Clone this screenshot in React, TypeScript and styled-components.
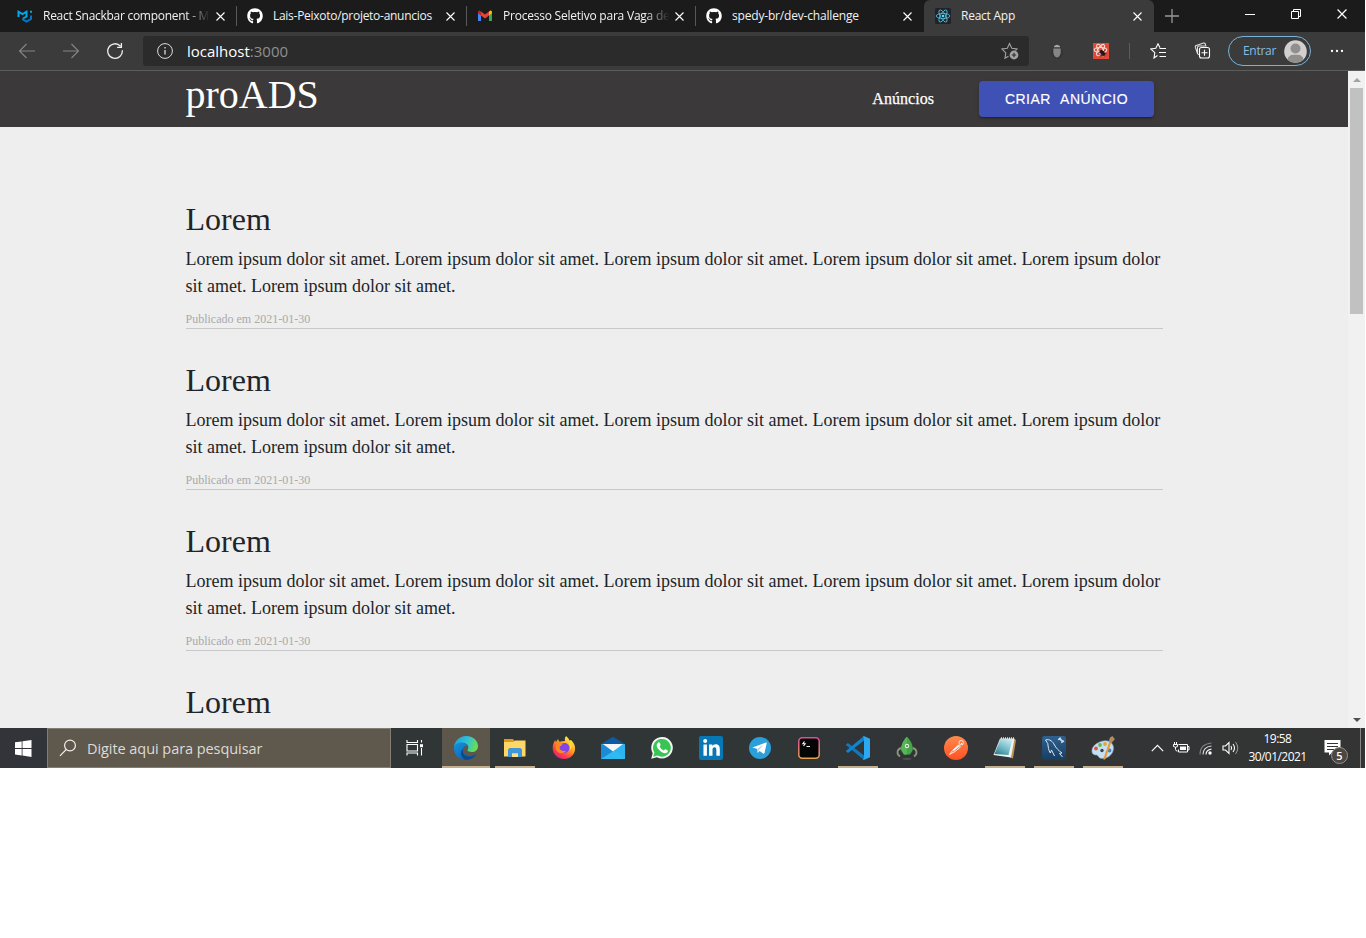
import React from 'react';
import styled, { createGlobalStyle, css } from 'styled-components';
import { FaGithub, FaLinkedinIn } from 'react-icons/fa';

const GlobalStyle = createGlobalStyle`
  * { box-sizing: border-box; }
  html, body { margin: 0; padding: 0; background: #fff; overflow: hidden; }
  svg { display: block; flex: none; }
`;

const ui = `'Open Sans', 'Noto Sans', sans-serif`;

const Screen = styled.div`
  width: 1365px;
  height: 768px;
  display: flex;
  flex-direction: column;
  overflow: hidden;
`;

/* Tab strip */
const TabStrip = styled.div`
  height: 32px;
  flex: none;
  display: flex;
  background: #1b1b1b;
  font: 12px/16px ${ui};
  color: #f2f2f2;
`;

const Tab = styled.div<{ $w: number; $pad: number; $active?: boolean; $divider?: boolean }>`
  width: ${p => p.$w}px;
  flex: none;
  display: flex;
  align-items: center;
  padding: 0 12px 0 ${p => p.$pad}px;
  position: relative;
  ${p => p.$active && css`background: #3b3b3b; border-radius: 6px 6px 0 0;`}
  ${p => p.$divider && css`
    &::after {
      content: '';
      position: absolute;
      right: 0;
      top: 6px;
      width: 1px;
      height: 20px;
      background: #585858;
    }
  `}
`;

const TabTitle = styled.span<{ $ls: number; $fade?: boolean }>`
  flex: 1;
  min-width: 0;
  margin: 0 6px 0 10px;
  white-space: nowrap;
  overflow: hidden;
  letter-spacing: ${p => p.$ls}px;
  ${p => p.$fade && css`
    mask-image: linear-gradient(to right, #000 calc(100% - 24px), transparent);
  `}
`;

const NewTab = styled.div`
  width: 36px;
  flex: none;
  display: grid;
  place-items: center;
`;

const WindowControls = styled.div`
  margin-left: auto;
  display: flex;
`;

const WindowButton = styled.div`
  width: 46px;
  height: 28px;
  display: grid;
  place-items: center;
`;

/* Toolbar */
const Toolbar = styled.div`
  height: 39px;
  flex: none;
  display: flex;
  align-items: center;
  background: #3b3b3b;
  border-bottom: 1px solid #5c5c5c;
  padding: 0 20px 0 18px;
`;

const NavButtons = styled.div`
  display: flex;
  gap: 26px;
  width: 125px;
`;

const AddressBar = styled.div`
  width: 886px;
  height: 30px;
  display: flex;
  align-items: center;
  gap: 14px;
  padding: 0 10px 0 14px;
  border-radius: 3px;
  background: #2b2b2b;
  font: 15px/20px ${ui};
  color: #fff;
`;

const Url = styled.span`
  flex: 1;
  span { color: #8f8f8f; }
`;

const ToolbarActions = styled.div`
  flex: 1;
  display: flex;
  align-items: center;
  padding-left: 20px;
`;

const ToolbarItem = styled.div<{ $gap: number }>`
  flex: none;
  margin-right: ${p => p.$gap}px;
`;

const Rule = styled.div`
  width: 1px;
  height: 16px;
  background: #5c5c5c;
`;

const Profile = styled.div`
  width: 83px;
  height: 30px;
  display: flex;
  align-items: center;
  justify-content: space-between;
  padding: 0 3px 0 14px;
  border: 1px solid #76b3dc;
  border-radius: 15px;
  font: 12px/16px ${ui};
  letter-spacing: -0.3px;
  color: #86bde2;
`;

/* Web page */
const Viewport = styled.div`
  height: 657px;
  flex: none;
  display: flex;
  overflow: hidden;
`;

const Page = styled.div`
  flex: 1;
  height: 657px;
  overflow: hidden;
  background: #eee;
  font-family: 'Liberation Serif', 'Times New Roman', serif;
  color: #212529;
`;

const Header = styled.header`
  height: 56px;
  display: flex;
  align-items: center;
  padding: 0 194px 0 185.5px;
  background: #3c393a;
  color: #fff;
`;

const Brand = styled.div`
  font-size: 40px;
  line-height: 46px;
  margin-bottom: 8px;
`;

const NavLink = styled.a`
  margin-left: auto;
  margin-right: 45px;
  font-size: 16px;
  line-height: 20px;
  letter-spacing: 0.04px;
  -webkit-text-stroke: 0.25px #fff;
`;

const CreateButton = styled.button`
  width: 175px;
  height: 36px;
  padding: 0;
  border: 0;
  border-radius: 4px;
  background: #3f51b5;
  color: #fff;
  font: 14px/24px 'Liberation Sans', Arial, sans-serif;
  letter-spacing: 0.5px;
  word-spacing: 5.500px;
  text-transform: uppercase;
  white-space: nowrap;
  -webkit-text-stroke: 0.15px #fff;
  box-shadow: 0 3px 1px -2px rgba(0, 0, 0, 0.2), 0 2px 2px 0 rgba(0, 0, 0, 0.14), 0 1px 5px 0 rgba(0, 0, 0, 0.12);
`;

const AdList = styled.main`
  padding: 41px 185.5px 0;
`;

const Ad = styled.article`
  height: 161px;
  padding-top: 32px;
  border-bottom: 1px solid #c8c8c8;
`;

const AdTitle = styled.h2`
  margin: 0 0 8px;
  font-size: 32px;
  font-weight: 400;
  line-height: 38px;
`;

const AdText = styled.p`
  margin: 0;
  font-size: 18px;
  line-height: 27px;
`;

const AdDate = styled.small`
  display: block;
  margin-top: 10px;
  font-size: 12px;
  line-height: 18px;
  color: #a9a9a9;
`;

const Scrollbar = styled.div`
  width: 17px;
  height: 657px;
  display: flex;
  flex-direction: column;
  align-items: center;
  background: #f1f1f1;
`;

const ScrollArrow = styled.div`
  width: 17px;
  height: 17px;
  display: grid;
  place-items: center;
`;

const ScrollThumb = styled.div`
  width: 13px;
  height: 226px;
  margin-bottom: auto;
  background: #c1c1c1;
`;

/* Taskbar */
const Taskbar = styled.div`
  height: 40px;
  flex: none;
  display: flex;
  background: linear-gradient(90deg, #32343a 0%, #303536 28%, #303536 58%, #333436 75%, #343434 100%);
  font-family: ${ui};
  color: #fff;
`;

const StartButton = styled.div`
  width: 47px;
  display: grid;
  place-items: center;
`;

const SearchBox = styled.div`
  width: 344px;
  display: flex;
  align-items: center;
  gap: 10px;
  padding-left: 11px;
  border: 1px solid #827d75;
  background: #5f584d;
  font-size: 14.5px;
  letter-spacing: -0.06px;
  color: #dedbd7;
`;

const TaskView = styled.div`
  width: 51px;
  padding-left: 15px;
  display: flex;
  align-items: center;
`;

const Apps = styled.div`
  display: flex;
  gap: 1px;
`;

const AppButton = styled.div<{ $open?: boolean; $focused?: boolean }>`
  width: 48px;
  height: 40px;
  display: flex;
  flex-direction: column;
  align-items: center;
  justify-content: space-between;
  padding-top: 8px;
  background: ${p => (p.$focused ? '#5c564b' : 'transparent')};
  &::after {
    content: '';
    width: ${p => (p.$focused ? 48 : 40)}px;
    height: 2px;
    background: ${p => (p.$open || p.$focused ? '#c3ae8d' : 'transparent')};
  }
`;

const Tray = styled.div`
  margin-left: auto;
  display: flex;
  align-items: center;
`;

const TrayIcons = styled.div`
  display: flex;
  align-items: center;
  gap: 9px;
`;

const Clock = styled.div`
  width: 77px;
  font-size: 12px;
  line-height: 18px;
  letter-spacing: -0.55px;
  text-align: center;
`;

const Notifications = styled.div`
  width: 44px;
  height: 40px;
  padding: 11px 0 0 8px;
  position: relative;
`;

const Badge = styled.span`
  position: absolute;
  left: 15px;
  top: 19px;
  width: 17px;
  height: 17px;
  border: 1px solid #96928b;
  border-radius: 50%;
  background: #4c4841;
  font: 600 11px/15px ${ui};
  text-align: center;
`;

const ShowDesktop = styled.div`
  width: 5px;
  height: 40px;
  border-left: 1px solid #858585;
`;

const CloseIcon = ({ size = 9 }: { size?: number }) => (
  <svg width={size} height={size} viewBox="0 0 9 9" stroke="#fff" strokeWidth="1.1">
    <path d="M.5 .5l8 8M8.500 .5l-8 8" />
  </svg>
);

const MuiIcon = () => (
  <svg width="16" height="14" viewBox="0 0 16 14" fill="none" strokeWidth="2">
    <path d="M1.500 8V2.700L5.500 5l4-2.300v4.800L6 9.500" stroke="#00a8ee" />
    <path d="M6 9.500v1l3.500 2L14 10V6.500" stroke="#0078c8" />
    <path d="M14 1.800v2" stroke="#00a8ee" />
  </svg>
);

const GmailIcon = () => (
  <svg width="14" height="12" viewBox="0 0 14 12">
    <path d="M0 2v8.500q0 .5.800.5H3V4z" fill="#4285f4" />
    <path d="M14 2v8.500q0 .5-.8.5H11V4z" fill="#34a853" />
    <path d="M0 2.200Q0 .3 1.600.5L3 1.500v4L0 3.300z" fill="#c5221f" />
    <path d="M14 2.200Q14 .3 12.400.5L11 1.500v4l3-2.200z" fill="#fbbc04" />
    <path d="M3 1.500l4 3 4-3v4l-4 3-4-3z" fill="#ea4335" />
  </svg>
);

const ReactIcon = () => (
  <svg width="16" height="16" viewBox="0 0 16 16">
    <rect width="16" height="16" rx="1.500" fill="#20232a" />
    <g fill="none" stroke="#55bfdb" strokeWidth=".85">
      <ellipse cx="8" cy="8" rx="6.800" ry="2.600" />
      <ellipse cx="8" cy="8" rx="6.800" ry="2.600" transform="rotate(60 8 8)" />
      <ellipse cx="8" cy="8" rx="6.800" ry="2.600" transform="rotate(120 8 8)" />
    </g>
    <circle cx="8" cy="8" r="1.300" fill="#61dafb" />
  </svg>
);

const EdgeIcon = () => (
  <svg width="24" height="24" viewBox="0 0 24 24">
    <defs>
      <linearGradient id="edgeTop" x1="0" y1=".3" x2="1" y2=".6">
        <stop offset="0" stopColor="#1c9fe0" />
        <stop offset=".5" stopColor="#30c3d4" />
        <stop offset="1" stopColor="#6be04b" />
      </linearGradient>
      <linearGradient id="edgeLow" x1="0" y1="0" x2="1" y2="1">
        <stop offset="0" stopColor="#1493df" />
        <stop offset="1" stopColor="#0b56a8" />
      </linearGradient>
    </defs>
    <path d="M0 12C0 5 5.500 0 12 0c7 0 12 4.600 12 10 0 4-3 6-6 6-3.500 0-5-1-4.500-2.200C15 12 15 8 10 7 5 6.500 1 9 0 12z" fill="url(#edgeTop)" />
    <path d="M0 12c0-3.500 4-6 8.500-5.500C12 7 14 9 14.300 11 12 9 9 10.500 9 14c0 5 6 7.500 13.300 4C20 22 16 24 12 24 5 24 0 19 0 12z" fill="url(#edgeLow)" />
    <path d="M9.200 12.500C7.500 18 12 21 17 20.500c2-.3 4-1.500 5.400-2.700C20 22 16 24 12 24 7 22.500 5 16 9.200 12.500z" fill="#0c4a8d" />
  </svg>
);

const ExplorerIcon = () => (
  <svg width="24" height="24" viewBox="0 0 24 24">
    <path d="M1 3h9l1.500 2H22v5H1z" fill="#dd9a12" />
    <path d="M1 6h9l2-1.500h10.500V20.500H1z" fill="#ffd766" />
    <path d="M5 21v-7.500L6.500 12h11l1.500 1.500V21h-4v-3.500H9V21z" fill="#3f96d8" />
    <path d="M9 17.500h6V21H9z" fill="#ffe08a" />
  </svg>
);

const FirefoxIcon = () => (
  <svg width="24" height="24" viewBox="0 0 24 24">
    <defs>
      <linearGradient id="fox" x1=".8" y1=".1" x2=".2" y2="1">
        <stop offset="0" stopColor="#fff044" />
        <stop offset=".4" stopColor="#ff9a24" />
        <stop offset=".7" stopColor="#ff4248" />
        <stop offset="1" stopColor="#e31587" />
      </linearGradient>
    </defs>
    <path d="M14 0c2 1.500 3 3 3.500 4.500L19 4c3 3 4.500 6 4 9.500C22.500 19 18 23 12 23S1 18.500.7 12.500C.6 9 1.500 6.500 3.200 4L4 6.200 6 3l1.300 2.700c2-.5 4-.6 5.700-.7-.5-2 0-3.500 1-5z" fill="url(#fox)" />
    <circle cx="12.500" cy="12" r="5" fill="#8344e8" />
    <path d="M4 6c3-1 5 0 7 2-1 0-1 2.200-3.800 2.500 0 4 4 5.500 7 4-2.500 4.500-9.500 3.500-10.700-2.500z" fill="#ff8a1c" />
    <path d="M15 5c3 2 4 6 2.500 9 2-1 2.800-3.500 2-6z" fill="#ffe13b" />
  </svg>
);

const MailIcon = () => (
  <svg width="24" height="24" viewBox="0 0 24 24">
    <path d="M0 8L12 .8 24 8v4H0z" fill="#0c59a4" />
    <path d="M0 8h24v15H0z" fill="#2cb5f0" />
    <path d="M0 8v15l15-9z" fill="#1b8bd7" />
    <path d="M0 23l13.500-8.500L24 23z" fill="#31bdf3" opacity=".8" />
    <path d="M2 8h20l-10 7.500z" fill="#f5f5f5" />
  </svg>
);

const WhatsAppIcon = () => (
  <svg width="24" height="24" viewBox="0 0 24 24">
    <path d="M1.200 22.800l1.500-5.600A10.800 10.800 0 1 1 7 21.300z" fill="#f4f6f4" />
    <path d="M3.200 20.800l1.200-4.200a8.900 8.900 0 1 1 3.200 3z" fill="#38c554" />
    <path d="M8.300 6.500c.7-.5 1.300-.2 1.600.6l.7 1.700c0 .6-.6 1-1 1.600 1 2 2.300 3 4.300 4 .6-.5 1-1.300 1.600-1.200l2 1c.7.500.3 1.700-.5 2.400-2 1.400-5 0-7-1.800-3.500-3.200-4.500-6-1.700-8.300z" fill="#fff" />
  </svg>
);

const LinkedInTile = styled.div`
  width: 24px;
  height: 24px;
  display: grid;
  place-items: center;
  border-radius: 2px;
  background: #0877b5;
`;

const TelegramIcon = () => (
  <svg width="24" height="24" viewBox="0 0 24 24">
    <circle cx="12" cy="12" r="11" fill="#2b9fd9" />
    <path d="M4.500 11.600L18 6.500q.9-.2.700.8L16.500 17q-.4 1.200-1.400.5L11.600 15l-1.900 1.900-.4-3.800z" fill="#fff" />
    <path d="M9.300 13.100L16 8.300 11 14l-1.300 2.900z" fill="#b8d5e7" />
  </svg>
);

const TerminalIcon = () => (
  <svg width="24" height="24" viewBox="0 0 24 24">
    <defs>
      <linearGradient id="term" x1="0" y1="0" x2="0" y2="1">
        <stop offset="0" stopColor="#e34a9e" />
        <stop offset="1" stopColor="#e9a14c" />
      </linearGradient>
    </defs>
    <rect x="1.800" y="1.800" width="20.400" height="20.400" rx="3.500" fill="#050505" stroke="url(#term)" strokeWidth="1.500" />
    <path d="M7.500 5.500L5.800 7.800h2.400L6.500 10M9.500 10.500h3.500" stroke="#f4f4f4" strokeWidth="1.100" fill="none" />
  </svg>
);

const VsCodeIcon = () => (
  <svg width="24" height="24" viewBox="0 0 24 24">
    <path d="M0 8.500L2 7l16 12.500V24L.2 9.300z" fill="#1278be" />
    <path d="M0 15.500L2 17 18 4.500V0L.2 14.700z" fill="#0f84d0" />
    <path d="M17.800 0L24 2.800v18.400L17.800 24q-.8-.2-1-.9l1.200-.6V1.600L16.800.9z" fill="#2aa8f2" />
  </svg>
);

const RobotIcon = () => (
  <svg width="24" height="24" viewBox="0 0 24 24">
    <path d="M6.500 12C2 13 1 18 5 20.500M17.500 12c4.500 1 5.500 6 1.500 8.500" stroke="#8b9677" strokeWidth="1.800" fill="none" />
    <path d="M12 .8c4 4 6.500 9 5.500 14L15 18.500H9L6.500 14.800C5.500 10 8 5 12 .8z" fill="#45a548" />
    <path d="M12 .8c-4 4-6.500 9-5.500 14L9 18.500h3z" fill="#55b657" />
    <circle cx="12" cy="10" r="2.200" fill="#e1eddb" />
    <circle cx="12" cy="10" r="1" fill="#55745a" />
    <ellipse cx="12" cy="22.800" rx="4.500" ry=".9" fill="#555" />
  </svg>
);

const PostmanIcon = () => (
  <svg width="24" height="24" viewBox="0 0 24 24">
    <defs>
      <linearGradient id="post" x1="0" y1="0" x2="0" y2="1">
        <stop offset="0" stopColor="#ff8a4c" />
        <stop offset="1" stopColor="#ff5026" />
      </linearGradient>
    </defs>
    <circle cx="12" cy="12" r="12" fill="url(#post)" />
    <path d="M5.500 18.500l3-4L14.500 9l2 2L11 15.500z" fill="#ff7a47" stroke="#ffe9de" strokeWidth="1" />
    <path d="M9.300 14.500l6-5" stroke="#fff" strokeWidth="1.300" />
    <circle cx="17.200" cy="6.700" r="2.200" fill="none" stroke="#ffe9de" />
    <path d="M17 7l1.500 1.500" stroke="#fff" />
  </svg>
);

const NotepadIcon = () => (
  <svg width="24" height="24" viewBox="0 0 24 24">
    <defs>
      <linearGradient id="note" x1=".8" y1="0" x2=".2" y2="1">
        <stop offset="0" stopColor="#c6edf1" />
        <stop offset=".55" stopColor="#74bac7" />
        <stop offset="1" stopColor="#2e7e8f" />
      </linearGradient>
    </defs>
    <path d="M20.500 2.500L23 4l-3 18.500-3.500-1.200z" fill="#b99556" />
    <path d="M7 2.500h14.500L18 21.500.500 19z" fill="#eef3f2" />
    <path d="M7.500 3h12L15.500 19 1.500 18z" fill="url(#note)" />
    <path d="M8 2.300h13" stroke="#d9e2e2" strokeWidth="2" strokeDasharray="1 1" />
  </svg>
);

const WorkbenchIcon = () => (
  <svg width="24" height="24" viewBox="0 0 24 24">
    <defs>
      <linearGradient id="bench" x1="0" y1="0" x2="0" y2="1">
        <stop offset="0" stopColor="#2f6190" />
        <stop offset="1" stopColor="#173e63" />
      </linearGradient>
    </defs>
    <rect width="24" height="24" rx="2.500" fill="url(#bench)" />
    <path d="M3.500 4C8 2.500 11 6 12.500 9c1.500 3 4 5.500 7.500 8l-2.500.4 3 3.600M3.500 4l2.300 3.600c.4 3 .7 7 2.500 9.400l1.200-3 3 6" fill="none" stroke="#dae6ee" strokeWidth="1" />
    <path d="M17.500 2.500l3 2.800" stroke="#c9d9e5" strokeWidth="1.800" />
    <path d="M16.200 3.800l2.400-2.200M19.400 6.800l2.600-2" stroke="#e5edf3" strokeWidth="1.200" />
  </svg>
);

const PaintIcon = () => (
  <svg width="24" height="24" viewBox="0 0 24 24">
    <path d="M10 5.500c7-2.500 12.500 1 12.500 6.500S18 22.500 10.500 22.500c-3 0-3-3.300-5-3.500C2 19 .5 17 1 14c.5-4 4.500-7 9-8.500z" fill="#c5dff1" stroke="#7ea5c3" strokeWidth=".6" />
    <circle cx="5" cy="12.500" r="1.900" fill="#dc5545" />
    <circle cx="9" cy="9" r="1.900" fill="#69b54e" />
    <circle cx="14" cy="8" r="1.900" fill="#eaa132" />
    <circle cx="11" cy="14.500" r="1.700" fill="#35434e" />
    <circle cx="18.500" cy="14.500" r="1.900" fill="#3a87cc" />
    <path d="M18.200 6l2 .8L14.500 23l-2 1 .3-2.500z" fill="#e79a3d" />
    <path d="M17.500 6l1.500-4.500L21.500 0l1 1.500L24 3l-3.500 4z" fill="#b48b62" />
  </svg>
);

const LinkedInIcon = () => (
  <LinkedInTile><FaLinkedinIn size={19} color="#fff" /></LinkedInTile>
);

const apps: { icon: React.FC; open?: boolean; focused?: boolean }[] = [
  { icon: EdgeIcon, focused: true },
  { icon: ExplorerIcon, open: true },
  { icon: FirefoxIcon },
  { icon: MailIcon },
  { icon: WhatsAppIcon },
  { icon: LinkedInIcon },
  { icon: TelegramIcon },
  { icon: TerminalIcon },
  { icon: VsCodeIcon, open: true },
  { icon: RobotIcon },
  { icon: PostmanIcon },
  { icon: NotepadIcon, open: true },
  { icon: WorkbenchIcon, open: true },
  { icon: PaintIcon, open: true },
];

const sentence = 'Lorem ipsum dolor sit amet.';
const ads = [1, 2, 3, 4].map(id => ({
  id,
  title: 'Lorem',
  text: Array(6).fill(sentence).join(' '),
  date: '2021-01-30',
}));

const Tabs = () => (
  <TabStrip>
    <Tab $w={237} $pad={17} $divider>
      <MuiIcon />
      <TabTitle $ls={-0.28} $fade>React Snackbar component - M</TabTitle>
      <CloseIcon />
    </Tab>
    <Tab $w={230} $pad={10} $divider>
      <FaGithub size={16} color="#fff" />
      <TabTitle $ls={-0.28}>Lais-Peixoto/projeto-anuncios</TabTitle>
      <CloseIcon />
    </Tab>
    <Tab $w={229} $pad={11} $divider>
      <GmailIcon />
      <TabTitle $ls={-0.22} $fade>&#8202;Processo Seletivo para Vaga de</TabTitle>
      <CloseIcon />
    </Tab>
    <Tab $w={228} $pad={10}>
      <FaGithub size={16} color="#fff" />
      <TabTitle $ls={-0.18}>spedy-br/dev-challenge</TabTitle>
      <CloseIcon />
    </Tab>
    <Tab $w={230} $pad={11} $active>
      <ReactIcon />
      <TabTitle $ls={-0.25}>React App</TabTitle>
      <CloseIcon />
    </Tab>
    <NewTab>
      <svg width="14" height="14" viewBox="0 0 14 14" stroke="#999" strokeWidth="1.300"><path d="M7 0v14M0 7h14" /></svg>
    </NewTab>
    <WindowControls>
      <WindowButton>
        <svg width="10" height="10" viewBox="0 0 10 10" stroke="#fff"><path d="M0 5.500h10" /></svg>
      </WindowButton>
      <WindowButton>
        <svg width="10" height="10" viewBox="0 0 10 10" fill="none" stroke="#fff"><path d="M.5 2.500h7v7h-7zM2.500 2V.5h7v7H8" /></svg>
      </WindowButton>
      <WindowButton><CloseIcon size={10} /></WindowButton>
    </WindowControls>
  </TabStrip>
);

const BrowserToolbar = () => (
  <Toolbar>
    <NavButtons>
      <svg width="18" height="16" viewBox="0 0 18 16" fill="none" stroke="#858585" strokeWidth="1.100"><path d="M17 8H1.500M8.500 1l-7 7 7 7" /></svg>
      <svg width="18" height="16" viewBox="0 0 18 16" fill="none" stroke="#858585" strokeWidth="1.100"><path d="M1 8h15.500M9.500 1l7 7-7 7" /></svg>
      <svg width="18" height="16" viewBox="0 0 18 16" fill="none" stroke="#f0f0f0" strokeWidth="1.300"><path d="M16.300 7.300A7.300 7.300 0 1 1 14.500 3.200M15.400 0v4.300h-4.300" /></svg>
    </NavButtons>
    <AddressBar>
      <svg width="16" height="16" viewBox="0 0 16 16" fill="none" stroke="#dcdcdc"><circle cx="8" cy="8" r="7.400" /><path d="M8 7v4.500M8 4v1.500" strokeWidth="1.300" /></svg>
      <Url>localhost<span>:3000</span></Url>
      <svg width="18" height="18" viewBox="0 0 18 18" fill="none" stroke="#a3a3a3" strokeWidth="1.100">
        <path d="M7.500 14.200L4 16.300l.8-5.400L1 7l5.300-.8L8.500 1.500l2.300 4.700L16 7l-1.500 1.300" />
        <circle cx="13" cy="13" r="4.400" fill="#a3a3a3" stroke="none" />
        <path d="M13 10.800v4.400M10.800 13h4.400" stroke="#2b2b2b" />
      </svg>
    </AddressBar>
    <ToolbarActions>
      <ToolbarItem $gap={28}>
        <svg width="16" height="16" viewBox="0 0 16 16">
          <ellipse cx="8" cy="9.500" rx="6" ry="6.500" fill="#2f2f2f" opacity=".5" />
          <path d="M5 3.300Q8 .3 11 3.300v1H5z" fill="#aaa" />
          <path d="M4.300 5.500h7.400v3.700q-.5 4.700-3.700 5.200-3.200-.5-3.700-5.200z" fill="#858585" />
        </svg>
      </ToolbarItem>
      <ToolbarItem $gap={20}>
        <svg width="16" height="16" viewBox="0 0 16 16">
          <rect width="16" height="16" fill="#df4936" />
          <g fill="none" stroke="#f7dcd7" strokeWidth="1.100">
            <ellipse cx="7.500" cy="7" rx="6.300" ry="2.500" />
            <ellipse cx="7.500" cy="7" rx="6.300" ry="2.500" transform="rotate(60 7.500 7)" />
            <ellipse cx="7.500" cy="7" rx="6.300" ry="2.500" transform="rotate(120 7.500 7)" />
          </g>
          <ellipse cx="9.500" cy="9.800" rx="2" ry="3.200" fill="#2a1512" transform="rotate(-40 9.500 9.800)" />
          <path d="M5.500 9.500l8 1.500M8 13.500l3.500-6M6.500 11.800l5.500 1" stroke="#2a1512" strokeWidth=".8" />
        </svg>
      </ToolbarItem>
      <ToolbarItem $gap={20}><Rule /></ToolbarItem>
      <ToolbarItem $gap={26}>
        <svg width="18" height="16" viewBox="0 0 18 16" fill="none" stroke="#fff" strokeWidth="1.100">
          <path d="M7.500 12.500L4 15l.8-5.400L.8 6l5-.8L8 .8l2 4M9.500 5.500H16M9 9.500H16M9.500 13.500H16" />
        </svg>
      </ToolbarItem>
      <ToolbarItem $gap={16}>
        <svg width="18" height="18" viewBox="0 0 18 18" fill="none" stroke="#fff" strokeWidth="1.100">
          <path d="M3.500 11.500L1.300 5.200Q1 3.800 2.300 3.400L9.500 1q1.300-.3 1.700.8l.5 1.500M5 12.500q-1.500 0-1.500-1.500V5.500Q3.500 4 5 4h7.500" opacity=".85" />
          <rect x="5.500" y="5.500" width="10" height="10.500" rx="2" fill="#3b3b3b" />
          <path d="M10.500 7.700v6M7.500 10.700h6" />
        </svg>
      </ToolbarItem>
      <ToolbarItem $gap={18}>
        <Profile>
          Entrar
          <svg width="23" height="23" viewBox="0 0 23 23">
            <circle cx="11.500" cy="11.500" r="11.300" fill="#d2d0ce" />
            <circle cx="11.500" cy="8.500" r="5" fill="#918f8d" />
            <path d="M3.500 19.300Q5 14.800 9 14.800h5q4 0 5.500 4.500a11.300 11.300 0 0 1-16 0z" fill="#918f8d" />
          </svg>
        </Profile>
      </ToolbarItem>
      <svg width="16" height="4" viewBox="0 0 16 4" fill="#fff"><circle cx="3" cy="2" r="1.150" /><circle cx="8" cy="2" r="1.150" /><circle cx="13" cy="2" r="1.150" /></svg>
    </ToolbarActions>
  </Toolbar>
);

const WindowsTaskbar = () => (
  <Taskbar>
    <StartButton>
      <svg width="17" height="17" viewBox="0 0 17 17" fill="#fff"><path d="M0 2.300L6.700 1.400V8H0zM7.500 1.300L16.500 0v8h-9zM0 8.900h6.700v6.600L0 14.600zM7.500 8.900h9v8l-9-1.300z" /></svg>
    </StartButton>
    <SearchBox>
      <svg width="18" height="18" viewBox="0 0 18 18" fill="none" stroke="#f0eeec" strokeWidth="1.200"><circle cx="11" cy="6.500" r="5.400" /><path d="M7.200 10.500L1 16.800" /></svg>
      Digite aqui para pesquisar
    </SearchBox>
    <TaskView>
      <svg width="18" height="16" viewBox="0 0 18 16" fill="none" stroke="#fff" strokeWidth="1.100"><path d="M1 0v2.500h10.500V0M1 15.500V13h10.500v2.500M1 4.500h10.500V11H1zM15.500 0v2.500M15.500 8v7.500" /><path d="M15.500 4.200v3" strokeWidth="3" /></svg>
    </TaskView>
    <Apps>
      {apps.map(({ icon: Icon, open, focused }, i) => (
        <AppButton key={i} $open={open} $focused={focused}><Icon /></AppButton>
      ))}
    </Apps>
    <Tray>
      <TrayIcons>
        <svg width="13" height="8" viewBox="0 0 13 8" fill="none" stroke="#fff" strokeWidth="1.200"><path d="M.8 7.200l5.700-5.800 5.700 5.800" /></svg>
        <svg width="17" height="12" viewBox="0 0 17 12" fill="none" stroke="#fff"><path d="M5.500 2.500h9v7.500h-9V7.500M14.500 4.500h1.500v3.500h-1.500M2.500 5v2.500q0 1.500 2 1.500M.5 2.500h4v2q-2 1.500-4 0zM1.500 0v2M3.500 0v2" /><path d="M7 4.500h6v3.500H7z" fill="#fff" stroke="none" /></svg>
        <svg width="14" height="13" viewBox="0 0 14 13" fill="none" stroke="#fff" strokeWidth="1.100"><path d="M1 12.500Q1 2 12.500 1" opacity=".4" /><path d="M4 12.500Q4 5 12.500 4" opacity=".8" /><path d="M7 12.500Q7 8 12.500 7" /><circle cx="11" cy="11" r="1.700" fill="#fff" stroke="none" /></svg>
        <svg width="17" height="14" viewBox="0 0 17 14" fill="none" stroke="#fff" strokeWidth="1.100"><path d="M1 5h2.500L7 1.500v11L3.500 9H1zM9 5q1.300 2 0 4M11 3q3 4 0 8" /><path d="M13.500 1q4.500 6 0 12" opacity=".45" /></svg>
      </TrayIcons>
      <Clock>19:58<br />30/01/2021</Clock>
      <Notifications>
        <svg width="17" height="17" viewBox="0 0 17 17"><path d="M.5 1h16v12.500H8L5 16.500v-3H.5z" fill="#fff" /><path d="M3 4.500h11M3 7.500h11M3 10.500h7" stroke="#343434" /></svg>
        <Badge>5</Badge>
      </Notifications>
      <ShowDesktop />
    </Tray>
  </Taskbar>
);

export default function App() {
  return (
    <>
      <GlobalStyle />
      <Screen>
        <Tabs />
        <BrowserToolbar />
        <Viewport>
          <Page>
            <Header>
              <Brand>proADS</Brand>
              <NavLink>Anúncios</NavLink>
              <CreateButton>Criar Anúncio</CreateButton>
            </Header>
            <AdList>
              {ads.map(ad => (
                <Ad key={ad.id}>
                  <AdTitle>{ad.title}</AdTitle>
                  <AdText>{ad.text}</AdText>
                  <AdDate>Publicado em {ad.date}</AdDate>
                </Ad>
              ))}
            </AdList>
          </Page>
          <Scrollbar>
            <ScrollArrow><svg width="8" height="4" viewBox="0 0 8 4" fill="#a3a3a3"><path d="M0 4l4-4 4 4z" /></svg></ScrollArrow>
            <ScrollThumb />
            <ScrollArrow><svg width="8" height="4" viewBox="0 0 8 4" fill="#505050"><path d="M0 0l4 4 4-4z" /></svg></ScrollArrow>
          </Scrollbar>
        </Viewport>
        <WindowsTaskbar />
      </Screen>
    </>
  );
}
